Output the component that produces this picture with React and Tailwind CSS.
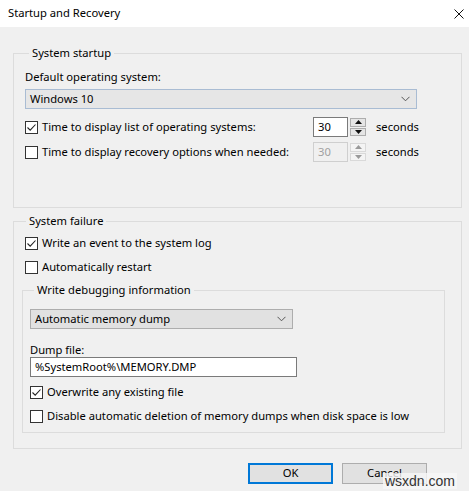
import React from 'react';

const font = { fontFamily: '"Noto Sans", "Open Sans", sans-serif' };

function Check({ checked }) {
  return (
    <span className="w-[13px] h-[13px] border border-[#333] bg-white flex items-center justify-center shrink-0">
      {checked && (
        <svg width="11" height="11" viewBox="0 0 11 11">
          <path d="M1.5 5.5 L4.2 8.2 L9.5 2.5" fill="none" stroke="#222" strokeWidth="1.1" />
        </svg>
      )}
    </span>
  );
}

function CheckRow({ checked, label, className = '' }) {
  return (
    <div className={`flex items-center gap-[4px] h-[16px] ${className}`}>
      <Check checked={checked} />
      <span className="text-[11.2px] text-black whitespace-nowrap">{label}</span>
    </div>
  );
}

function Chevron() {
  return (
    <svg width="9" height="6" viewBox="0 0 9 6">
      <path d="M0.5 0.8 L4.5 4.8 L8.5 0.8" fill="none" stroke="#555" strokeWidth="1" />
    </svg>
  );
}

function Spinner({ value, disabled }) {
  const arrow = disabled ? '#9a9a9a' : '#111';
  const btn = disabled ? 'border-[#d9d9d9] bg-[#f4f4f4]' : 'border-[#adadad] bg-[#e5e5e5]';
  return (
    <div className="flex h-[20px]">
      <div className={`w-[35px] h-full border flex items-center pl-[4px] text-[11.2px] ${disabled ? 'border-[#cfcfcf] bg-[#f0f0f0] text-[#a0a0a0]' : 'border-[#7a7a7a] bg-white text-black'}`}>
        {value}
      </div>
      <div className="w-[18px] h-full flex flex-col gap-[1px] py-[1px] pl-[2px] bg-[#f0f0f0]">
        <div className={`flex-1 flex items-center justify-center border ${btn}`}>
          <svg width="7" height="4" viewBox="0 0 7 4"><path d="M0 4 L3.5 0 L7 4 Z" fill={arrow} /></svg>
        </div>
        <div className={`flex-1 flex items-center justify-center border ${btn}`}>
          <svg width="7" height="4" viewBox="0 0 7 4"><path d="M0 0 L3.5 4 L7 0 Z" fill={arrow} /></svg>
        </div>
      </div>
    </div>
  );
}

function Group({ title, className = '', children }) {
  return (
    <fieldset className={`border border-[#dcdcdc] ${className}`}>
      <legend className="ml-[4px] px-[3px] text-[11.2px] leading-[16px] text-black">{title}</legend>
      {children}
    </fieldset>
  );
}

export default function App() {
  return (
    <div className="w-[469px] h-[491px] bg-[#f0f0f0] flex flex-col relative overflow-hidden" style={font}>
      <div className="h-[27px] bg-white flex items-center justify-between pl-[8px] pr-[5px] shrink-0">
        <span className="text-[11.2px] text-black">Startup and Recovery</span>
        <svg width="10" height="10" viewBox="0 0 10 10">
          <path d="M0.5 0.5 L9.5 9.5 M9.5 0.5 L0.5 9.5" stroke="#111" strokeWidth="1" />
        </svg>
      </div>

      <div className="flex flex-col pl-[13px] pr-[7px] pt-[18px]">
        <Group title="System startup" className="pl-[11px] pb-[45px] pt-[8px]">
          <div className="text-[11.2px] leading-[16px] text-black">Default operating system:</div>
          <div className="mt-[4px] w-[392px] h-[20px] border border-[#a9bcd3] bg-[#e6e6e6] flex items-center justify-between pl-[4px] pr-[6px]">
            <span className="text-[11.2px] text-black">Windows 10</span>
            <Chevron />
          </div>
          <div className="mt-[8px] flex items-center h-[20px]">
            <CheckRow checked label="Time to display list of operating systems:" className="w-[288px]" />
            <Spinner value="30" />
            <span className="ml-[10px] text-[11.2px] text-black">seconds</span>
          </div>
          <div className="mt-[5px] flex items-center h-[20px]">
            <CheckRow label="Time to display recovery options when needed:" className="w-[288px]" />
            <Spinner value="30" disabled />
            <span className="ml-[10px] text-[11.2px] text-black">seconds</span>
          </div>
        </Group>

        <Group title="System failure" className="mt-[5px] pl-[8px] pr-[16px] pb-[15px] pt-[6px]">
          <CheckRow checked label="Write an event to the system log" className="ml-[3px]" />
          <CheckRow label="Automatically restart" className="ml-[3px] mt-[8px]" />

          <Group title="Write debugging information" className="mt-[7px] pl-[7px] pb-[8px] pt-[11px]">
            <div className="w-[263px] h-[20px] border border-[#adadad] bg-[#e1e1e1] flex items-center justify-between pl-[4px] pr-[6px]">
              <span className="text-[11.2px] text-black">Automatic memory dump</span>
              <Chevron />
            </div>
            <div className="mt-[13px] text-[11.2px] leading-[15px] text-black">Dump file:</div>
            <div className="w-[267px] h-[20px] border border-[#7a7a7a] bg-white flex items-center pl-[4px]">
              <span className="text-[11.2px] text-black">%SystemRoot%\MEMORY.DMP</span>
            </div>
            <CheckRow checked label="Overwrite any existing file" className="mt-[7px]" />
            <CheckRow label="Disable automatic deletion of memory dumps when disk space is low" className="mt-[8px]" />
          </Group>
        </Group>

        <div className="mt-[14px] flex justify-end gap-[9px] pr-[35px]">
          <button className="w-[85px] h-[21px] border-2 border-[#0078d7] bg-[#e1e1e1] text-[11.2px] text-black">OK</button>
          <button className="w-[85px] h-[21px] border border-[#adadad] bg-[#e1e1e1] text-[11.2px] text-black">Cancel</button>
        </div>
      </div>

      <div className="absolute right-[12px] bottom-[2px] px-[2px] bg-[#f7f7f7]/80 text-[14px] leading-[16px] text-[#333]" style={{ fontFamily: '"Liberation Sans", Arial, sans-serif' }}>
        wsxdn.com
      </div>
    </div>
  );
}
